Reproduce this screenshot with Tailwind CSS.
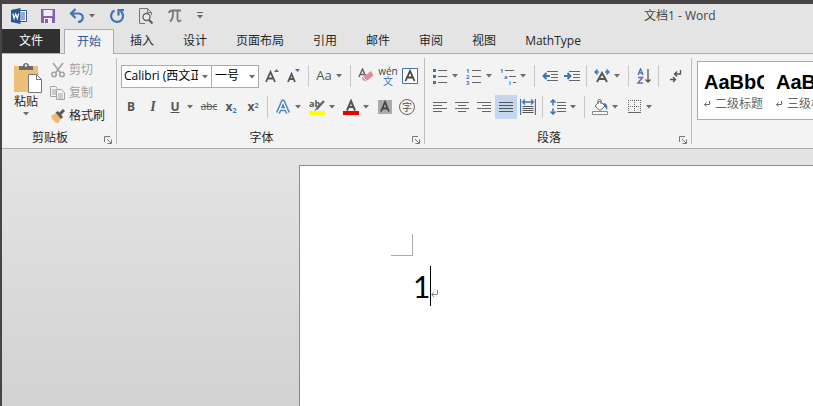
<!DOCTYPE html>
<html lang="zh-CN">
  <head>
    <meta charset="UTF-8" />
    <meta name="viewport" content="width=device-width, initial-scale=1.0" />
    <title>文档1 - Word</title>
    <script src="https://cdn.jsdelivr.net/npm/@tailwindcss/browser@4"></script>
  </head>
  <body class="flex h-screen flex-col overflow-hidden border-t-4 border-l-2 border-[#464446] bg-[#e4e4e4] font-['Open_Sans','Noto_Sans_CJK_SC',sans-serif] text-xs text-[#262626]">
    <svg class="hidden">
      <symbol id="caret" viewBox="0 0 12 6"><path d="M1 1h6L4 4.500z" fill="#6a6a6a" /></symbol>
      <symbol id="launcher" viewBox="0 0 8 8">
        <path d="M.5 6V.5H6M3 3l4 4M7.500 3.500v4h-4" fill="none" stroke="#777" />
      </symbol>
    </svg>

    <!-- title bar -->
    <header class="flex h-[24px] shrink-0 items-center whitespace-nowrap pl-[9px]">
      <div class="flex items-center gap-[13px]">
        <button aria-label="Word">
          <svg class="h-4 w-4" viewBox="0 0 16 16">
            <path d="M9 2.500h6.500v11H9" fill="#fff" stroke="#2a5699" />
            <path d="M10 5h4M10 7h4M10 9h4M10 11h4" stroke="#2a5699" />
            <path d="M0 2l9.500-2v16L0 14z" fill="#2a5699" />
            <path d="M1.800 5.500l1.300 5L4.700 6l1.600 4.500 1.300-5" fill="none" stroke="#fff" stroke-width="1.200" />
          </svg>
        </button>
        <button aria-label="保存">
          <svg class="h-4 w-4" viewBox="0 0 16 16">
            <path d="M1 1h14v14H1z" fill="#8a5fae" />
            <path d="M3.500 2h9v6h-9z" fill="#f4eef8" />
            <path d="M4 10h8v5H4z" fill="#f4eef8" />
            <path d="M5 11h3v4H5z" fill="#8a5fae" />
          </svg>
        </button>
        <div class="flex items-center">
          <button aria-label="撤消">
            <svg class="h-4 w-4" viewBox="0 0 16 16" fill="none" stroke="#3d74b5" stroke-width="2.200">
              <path d="M6.500 1L2 5.500 6.500 10M2.500 5.500h7c6 0 5.500 8-.500 8.500" />
            </svg>
          </button>
          <button class="ml-[3px]" aria-label="撤消列表"><svg class="h-[6px] w-2" viewBox="0 0 8 6"><use href="#caret" width="12" height="6" /></svg></button>
        </div>
        <button aria-label="重复">
          <svg class="h-4 w-4" viewBox="0 0 16 16" fill="none" stroke="#3d74b5" stroke-width="2.200">
            <path d="M5.500 2.500A6 6 0 1 0 11.500 3M15 2H9.500v5.500" />
          </svg>
        </button>
        <button aria-label="打印预览">
          <svg class="h-4 w-4" viewBox="0 0 16 16" fill="none" stroke="#777">
            <path d="M7 15.500H1.500V.5h8l4 4V7M9.500.5v4h4" fill="none" />
            <circle cx="8.500" cy="9" r="3.500" fill="#e9eef4" stroke="#666" stroke-width="1.400" />
            <path d="M11 12l3.500 3.500" stroke="#555" stroke-width="2" />
          </svg>
        </button>
        <button aria-label="公式">
          <svg class="h-4 w-4" viewBox="0 0 16 16" fill="none" stroke="#777" stroke-width="1.800">
            <path d="M2 5c.5-2 1.500-2.500 3-2.500h9M6 3c0 5 0 8-3 10.500M10.500 3v8c0 3 2 3 3.500 1" />
          </svg>
        </button>
        <button aria-label="自定义快速访问工具栏">
          <svg class="h-2 w-2" viewBox="0 0 8 8"><path d="M1 .5h6" stroke="#666" /><path d="M1 3h6L4 6.500z" fill="#666" /></svg>
        </button>
      </div>
      <h1 class="ml-[440px] text-[#444]">文档1 - Word</h1>
    </header>

    <!-- ribbon tabs -->
    <nav class="mt-px flex h-[25px] shrink-0 items-stretch gap-[3px] whitespace-nowrap border-b border-[#ababab]">
      <button class="mr-[1px] w-[58px] bg-[#303030] text-white">文件</button>
      <button class="-mb-px border border-b-0 border-[#ababab] bg-[#f3f3f3] px-3 text-[#2a5699]">开始</button>
      <button class="border border-transparent px-3">插入</button>
      <button class="border border-transparent px-3">设计</button>
      <button class="border border-transparent px-3">页面布局</button>
      <button class="border border-transparent px-3">引用</button>
      <button class="border border-transparent px-3">邮件</button>
      <button class="border border-transparent px-3">审阅</button>
      <button class="border border-transparent px-3">视图</button>
      <button class="border border-transparent px-3">MathType</button>
    </nav>

    <!-- ribbon -->
    <div class="flex h-[95px] shrink-0 items-stretch overflow-hidden whitespace-nowrap border-b border-[#ababab] bg-[#f3f3f3] py-1">
      <!-- clipboard -->
      <section class="flex w-[115px] shrink-0 flex-col border-r border-[#bdbdbd]">
        <div class="flex flex-1 pl-2">
          <button class="flex w-8 flex-col items-center pt-1">
            <svg class="h-8 w-8 shrink-0" viewBox="0 0 32 32">
              <path d="M4 4h24v26H4z" fill="#edc077" />
              <path d="M9 8V4h4c0-4 6-4 6 0h4v4z" fill="#6a6a6a" />
              <circle cx="16" cy="3.500" r="1.200" fill="#f3f3f3" />
              <path d="M18.500 12.500h8l5 5v13h-13z" fill="#fff" stroke="#777" />
              <path d="M26.500 12.500v5h5" fill="none" stroke="#777" />
            </svg>
            <span class="leading-4">粘贴</span>
            <svg class="mt-px h-[6px] w-2" viewBox="0 0 8 6"><use href="#caret" width="12" height="6" /></svg>
          </button>
          <div class="flex flex-col pl-2">
            <button class="flex h-[23px] items-center gap-[3px] text-[#a0a0a0]">
              <svg class="h-4 w-4" viewBox="0 0 16 16" fill="none" stroke="#a3a3a3" stroke-width="1.600">
                <path d="M3 1l7.500 10M13 1L5.500 11" />
                <circle cx="4" cy="12.500" r="2.200" /><circle cx="12" cy="12.500" r="2.200" />
              </svg>
              剪切
            </button>
            <button class="flex h-[23px] items-center gap-[3px] text-[#a0a0a0]">
              <svg class="h-4 w-4" viewBox="0 0 16 16" fill="#f3f3f3" stroke="#a3a3a3">
                <path d="M.5 1.500h5l2 2v8h-7zM2 5h4M2 7h4M2 9h4" />
                <path d="M6.500 4.500h5l3 3v7h-8zM8 9h5M8 11h5M8 13h5" />
              </svg>
              复制
            </button>
            <button class="flex h-[23px] items-center gap-[3px]">
              <svg class="h-4 w-4" viewBox="0 0 16 16">
                <path d="M1 8l5-3 5 5.500-3 5C5 14.500 2 12 1 8z" fill="#edb975" />
                <path d="M5.500 4.500L8 3l5 6-2 2z" fill="#5a5a5a" />
                <path d="M10 6l4-4" stroke="#5a5a5a" stroke-width="3" />
              </svg>
              格式刷
            </button>
          </div>
        </div>
        <div class="flex h-3 items-center pr-1">
          <span class="flex-1 pr-[6px] text-center">剪贴板</span>
          <button class="self-end" aria-label="剪贴板选项"><svg class="h-2 w-2"><use href="#launcher" /></svg></button>
        </div>
      </section>

      <!-- font -->
      <section class="flex w-[308px] shrink-0 flex-col border-r border-[#bdbdbd]">
        <div class="flex flex-1 flex-col gap-[7px] pt-[6px] pl-[3px]">
          <div class="flex h-6 items-center">
            <div class="relative ml-px flex h-[23px] w-[91px] border border-[#ababab] bg-white">
              <select aria-label="字体" class="w-[76px] appearance-none overflow-hidden pl-[2px] text-xs text-black"><option>Calibri (西文正文)</option></select>
              <svg class="pointer-events-none absolute top-2 right-0 h-[6px] w-[10px]" viewBox="0 0 10 6"><use href="#caret" width="12" height="6" /></svg>
            </div>
            <div class="relative -ml-px mr-[2px] flex h-[23px] w-12 border border-[#ababab] bg-white">
              <select aria-label="字号" class="w-9 appearance-none pl-[3px] text-xs text-black"><option>一号</option></select>
              <svg class="pointer-events-none absolute top-2 right-0 h-[6px] w-[10px]" viewBox="0 0 10 6"><use href="#caret" width="12" height="6" /></svg>
            </div>
            <button class="flex w-[22px] items-center justify-center" aria-label="增大字号">
              <svg class="h-4 w-4" viewBox="0 0 16 16"><path d="M2 14L6.500 4 11 14M3.500 10.500h6" fill="none" stroke="#555" stroke-width="1.800" /><path d="M10 4h5l-2.500-3z" fill="#3d74b5" /></svg>
            </button>
            <button class="flex w-[22px] items-center justify-center" aria-label="减小字号">
              <svg class="h-4 w-4" viewBox="0 0 16 16"><path d="M2 14l3.500-8L9 14M3.500 11h4" fill="none" stroke="#555" stroke-width="1.800" /><path d="M9 1h5l-2.500 3z" fill="#3d74b5" /></svg>
            </button>
            <span class="mr-1 ml-[3px] h-[22px] w-px bg-[#c6c6c6]"></span>
            <button class="w-[22px] text-center text-[13px] text-[#555]">Aa</button>
            <button class="w-3" aria-label="更改大小写"><svg class="h-[6px] w-3"><use href="#caret" /></svg></button>
            <span class="mr-1 ml-[3px] h-[22px] w-px bg-[#c6c6c6]"></span>
            <button class="flex w-[22px] items-center justify-center" aria-label="清除格式">
              <svg class="h-4 w-4" viewBox="0 0 16 16"><path d="M1 9l3.500-8L8 9M2.500 6.500h4" fill="none" stroke="#666" stroke-width="1.500" /><path d="M9 6l4-3 2.500 4.500L8 13.500 4.500 12 4 9.500z" fill="#e58a99" /><path d="M5 9l4 4" stroke="#f3f3f3" /></svg>
            </button>
            <button class="flex w-[22px] flex-col items-center text-[10px] leading-[10px] text-[#444]"><span>wén</span><span class="text-[#3d74b5]">文</span></button>
            <button class="flex w-[22px] items-center justify-center" aria-label="字符边框">
              <svg class="h-4 w-4" viewBox="0 0 16 16" fill="none"><path d="M.5.5h15v15H.5z" fill="#fff" stroke="#3d74b5" /><path d="M3.500 13L8 3l4.500 10M5 9.500h6" stroke="#444" stroke-width="1.800" /></svg>
            </button>
          </div>
          <div class="flex h-6 items-center text-[#555]">
            <button class="w-[22px] font-bold">B</button>
            <button class="w-[22px] font-['Liberation_Serif',serif] text-sm font-bold italic">I</button>
            <button class="w-[22px] font-bold underline">U</button>
            <button class="w-3" aria-label="下划线样式"><svg class="h-[6px] w-3"><use href="#caret" /></svg></button>
            <button class="w-[22px] text-[10px] line-through">abc</button>
            <button class="w-[22px] font-bold" aria-label="下标">x<sub class="text-[7px] text-[#3d74b5]">2</sub></button>
            <button class="w-[22px] font-bold" aria-label="上标">x<sup class="text-[7px] text-[#3d74b5]">2</sup></button>
            <span class="mr-1 ml-[3px] h-[22px] w-px bg-[#c6c6c6]"></span>
            <button class="flex w-[22px] items-center justify-center" aria-label="文本效果">
              <svg class="h-4 w-4" viewBox="0 0 16 16" fill="none" stroke-linejoin="round"><path d="M3 14L8 2.500 13 14M5 10h6" stroke="#a9c5ea" stroke-width="5" /><path d="M3 14L8 2.500 13 14M5 10h6" stroke="#3d74b5" stroke-width="3.400" /><path d="M3 14L8 2.500 13 14M5 10h6" stroke="#fff" stroke-width="1.400" /></svg>
            </button>
            <button class="w-3" aria-label="文本效果列表"><svg class="h-[6px] w-3"><use href="#caret" /></svg></button>
            <button class="flex w-[22px] items-center justify-center" aria-label="突出显示">
              <svg class="h-4 w-4 overflow-visible" viewBox="0 0 16 16"><text x="0" y="8" font-size="9" font-weight="bold" fill="#555">ab</text><path d="M15 2L8 9.500" stroke="#666" stroke-width="2.500" /><path d="M8 8l2 2-5 2z" fill="#777" /><path d="M0 12h16v4H0z" fill="#ff0" /></svg>
            </button>
            <button class="w-3" aria-label="突出显示颜色"><svg class="h-[6px] w-3"><use href="#caret" /></svg></button>
            <button class="flex w-[22px] items-center justify-center" aria-label="字体颜色">
              <svg class="h-4 w-4" viewBox="0 0 16 16"><path d="M4 11.500L8 2l4 9.500M5.500 8h5" fill="none" stroke="#555" stroke-width="2" /><path d="M0 12h16v4H0z" fill="#e60000" /></svg>
            </button>
            <button class="w-3" aria-label="字体颜色列表"><svg class="h-[6px] w-3"><use href="#caret" /></svg></button>
            <button class="flex w-[22px] items-center justify-center" aria-label="字符底纹">
              <svg class="h-4 w-4" viewBox="0 0 16 16"><path d="M1 1h14v14H1z" fill="#ababab" /><path d="M4 12.500L8 3l4 9.500M5.500 9.500h5" fill="none" stroke="#444" stroke-width="1.800" /></svg>
            </button>
            <button class="flex w-[22px] items-center justify-center" aria-label="带圈字符">
              <span class="flex h-4 w-4 items-center justify-center rounded-full border border-[#666] text-[10px] leading-none">字</span>
            </button>
          </div>
        </div>
        <div class="flex h-3 items-center pr-1">
          <span class="flex-1 pr-[6px] text-center">字体</span>
          <button class="self-end" aria-label="字体选项"><svg class="h-2 w-2"><use href="#launcher" /></svg></button>
        </div>
      </section>

      <!-- paragraph -->
      <section class="flex w-[267px] shrink-0 flex-col border-r border-[#bdbdbd]">
        <div class="flex flex-1 flex-col gap-[7px] pt-[6px] pl-1">
          <div class="flex h-6 items-center">
            <button class="flex w-[22px] items-center justify-center" aria-label="项目符号">
              <svg class="h-4 w-4" viewBox="0 0 16 16"><path d="M6 2.500h9M6 8.500h9M6 14.500h9" stroke="#666" /><path d="M1 1h3v3H1zM1 7h3v3H1zM1 13h3v3H1z" fill="#3d74b5" /></svg>
            </button>
            <button class="w-3" aria-label="项目符号库"><svg class="h-[6px] w-3"><use href="#caret" /></svg></button>
            <button class="flex w-[22px] items-center justify-center" aria-label="编号">
              <svg class="h-4 w-4 overflow-visible" viewBox="0 0 16 16"><path d="M6 2.500h9M6 8.500h9M6 14.500h9" stroke="#666" /><g font-size="6" font-weight="bold" fill="#3d74b5"><text x="0" y="5">1</text><text x="0" y="11">2</text><text x="0" y="17">3</text></g></svg>
            </button>
            <button class="w-3" aria-label="编号库"><svg class="h-[6px] w-3"><use href="#caret" /></svg></button>
            <button class="flex w-[22px] items-center justify-center" aria-label="多级列表">
              <svg class="h-4 w-4 overflow-visible" viewBox="0 0 16 16"><path d="M5 2.500h9M9 8.500h7M13 14.500h3" stroke="#666" /><g font-size="6" font-weight="bold" fill="#3d74b5"><text x="0" y="5">1</text><text x="4" y="11">a</text><text x="9" y="17">i</text></g></svg>
            </button>
            <button class="w-3" aria-label="多级列表库"><svg class="h-[6px] w-3"><use href="#caret" /></svg></button>
            <span class="mr-1 ml-[3px] h-[22px] w-px bg-[#c6c6c6]"></span>
            <button class="flex w-[22px] items-center justify-center" aria-label="减少缩进量">
              <svg class="h-4 w-4" viewBox="0 0 16 16" fill="none"><path d="M5 3.500h11M9 6.500h7M9 9.500h7M5 12.500h11" stroke="#666" /><path d="M8 8H2M4.500 5L1.500 8l3 3" stroke="#3d74b5" stroke-width="2" /></svg>
            </button>
            <button class="flex w-[22px] items-center justify-center" aria-label="增加缩进量">
              <svg class="h-4 w-4" viewBox="0 0 16 16" fill="none"><path d="M5 3.500h11M9 6.500h7M9 9.500h7M5 12.500h11" stroke="#666" /><path d="M0 8h6M3.500 5l3 3-3 3" stroke="#3d74b5" stroke-width="2" /></svg>
            </button>
            <span class="mr-1 ml-[3px] h-[22px] w-px bg-[#c6c6c6]"></span>
            <button class="flex w-[22px] items-center justify-center" aria-label="中文版式">
              <svg class="h-4 w-4" viewBox="0 0 16 16" fill="none"><path d="M3 14L8 5l5 9M4.500 11h7" stroke="#555" stroke-width="2" /><path d="M5 4H1M3.500 1.500L1 4l2.500 2.500M11 4h4M12.500 1.500L15 4l-2.500 2.500" stroke="#3d74b5" stroke-width="1.400" /></svg>
            </button>
            <button class="w-3" aria-label="中文版式列表"><svg class="h-[6px] w-3"><use href="#caret" /></svg></button>
            <span class="mr-1 ml-[3px] h-[22px] w-px bg-[#c6c6c6]"></span>
            <button class="flex w-[22px] items-center justify-center" aria-label="排序">
              <svg class="h-4 w-4" viewBox="0 0 16 16" fill="none"><path d="M2 7l2.500-6L7 7M3 5h3" stroke="#3d74b5" stroke-width="1.300" /><path d="M2 9.500h4.500L2 15h5" stroke="#8a5fae" stroke-width="1.500" /><path d="M12 1v13M9.500 11.500L12 14l2.500-2.500" stroke="#555" stroke-width="1.300" /></svg>
            </button>
            <span class="mr-1 ml-[3px] h-[22px] w-px bg-[#c6c6c6]"></span>
            <button class="flex w-[22px] items-center justify-center" aria-label="显示编辑标记">
              <svg class="h-4 w-4" viewBox="0 0 16 16" fill="none" stroke="#555" stroke-width="1.300"><path d="M14.500 2v4H9M11 3.500L8.500 6 11 8.500M4 11.500h5.500M7 9l2.500 2.500L7 14" /></svg>
            </button>
          </div>
          <div class="flex h-6 items-center">
            <button class="flex w-[22px] items-center justify-center" aria-label="左对齐">
              <svg class="h-4 w-4" viewBox="0 0 16 16"><path d="M1 3.500h14M1 6.500h9M1 9.500h14M1 12.500h9" stroke="#666" /></svg>
            </button>
            <button class="flex w-[22px] items-center justify-center" aria-label="居中">
              <svg class="h-4 w-4" viewBox="0 0 16 16"><path d="M1 3.500h14M4 6.500h8M1 9.500h14M4 12.500h8" stroke="#666" /></svg>
            </button>
            <button class="flex w-[22px] items-center justify-center" aria-label="右对齐">
              <svg class="h-4 w-4" viewBox="0 0 16 16"><path d="M1 3.500h14M6 6.500h9M1 9.500h14M6 12.500h9" stroke="#666" /></svg>
            </button>
            <button class="flex h-6 w-[22px] items-center justify-center bg-[#c5d5ee]" aria-label="两端对齐">
              <svg class="h-4 w-4" viewBox="0 0 16 16"><path d="M1 3.500h14M1 6.500h14M1 9.500h14M1 12.500h14" stroke="#555" /></svg>
            </button>
            <button class="flex w-[22px] items-center justify-center" aria-label="分散对齐">
              <svg class="h-4 w-4" viewBox="0 0 16 16" fill="none"><path d="M2.500 7.500h11M2.500 9.500h11M2.500 11.500h11M2.500 13.500h11" stroke="#555" /><path d="M.5 0v16M15.500 0v16M3 3h10M5 .5L2.500 3 5 5.500M11 .5L13.500 3 11 5.500" stroke="#3d74b5" stroke-width="1.300" /></svg>
            </button>
            <span class="mr-1 ml-[3px] h-[22px] w-px bg-[#c6c6c6]"></span>
            <button class="flex w-[22px] items-center justify-center" aria-label="行距">
              <svg class="h-4 w-4" viewBox="0 0 16 16" fill="none"><path d="M7 3.500h9M7 6.500h9M7 9.500h9M7 12.500h9" stroke="#666" /><path d="M3 1v5.500M.5 3.500L3 1l2.500 2.500M3 9.500V15M.5 12.500L3 15l2.500-2.500" stroke="#3d74b5" stroke-width="1.500" /></svg>
            </button>
            <button class="w-3" aria-label="行距列表"><svg class="h-[6px] w-3"><use href="#caret" /></svg></button>
            <span class="mr-1 ml-[3px] h-[22px] w-px bg-[#c6c6c6]"></span>
            <button class="flex w-[22px] items-center justify-center" aria-label="底纹">
              <svg class="h-4 w-4" viewBox="0 0 16 16" fill="none"><path d="M3 7l5-5 5 5-5 4.500zM6 5V1.500C6 0 9 0 9 1.500V5" fill="#fff" stroke="#666" /><path d="M11 4c4 0 5 3 4 7-1-1-2-3-2-4z" fill="#3d74b5" /><path d="M.5 12.500h15v3H.5z" fill="#fff" stroke="#888" /></svg>
            </button>
            <button class="w-3" aria-label="底纹颜色"><svg class="h-[6px] w-3"><use href="#caret" /></svg></button>
            <button class="flex w-[22px] items-center justify-center" aria-label="边框">
              <svg class="h-4 w-4" viewBox="0 0 16 16" fill="none" stroke="#666"><path d="M2 1.500h13M2 7.500h13M2.500 1v12M8.500 1v12M14.500 1v12" stroke-dasharray="1 1" /><path d="M2 13.500h13" /></svg>
            </button>
            <button class="w-3" aria-label="边框列表"><svg class="h-[6px] w-3"><use href="#caret" /></svg></button>
          </div>
        </div>
        <div class="flex h-3 items-center pr-1">
          <span class="flex-1 pr-[6px] text-center">段落</span>
          <button class="self-end" aria-label="段落选项"><svg class="h-2 w-2"><use href="#launcher" /></svg></button>
        </div>
      </section>

      <!-- styles gallery -->
      <section class="min-w-0 flex-1 pt-[3px] pl-[5px]">
        <div class="flex h-[59px] overflow-hidden border border-r-0 border-[#ababab] bg-white pt-[3px]">
          <button class="flex w-[72px] shrink-0 flex-col justify-center px-[6px] text-left text-[#666]">
            <span class="block w-full overflow-hidden font-['Liberation_Sans',sans-serif] text-xl leading-6 font-bold text-black">AaBbCc</span>
            <span class="flex items-center gap-[5px] leading-5">
              <svg class="h-[6px] w-[6px]" viewBox="0 0 6 6" fill="none" stroke="#666"><path d="M5.500 0v3.500h-5M2.500 1.500l-2 2 2 2" /></svg>
              二级标题
            </span>
          </button>
          <button class="flex w-[72px] shrink-0 flex-col justify-center px-[6px] text-left text-[#666]">
            <span class="block w-full overflow-hidden font-['Liberation_Sans',sans-serif] text-xl leading-6 font-bold text-black">AaBbCc</span>
            <span class="flex items-center gap-[5px] leading-5">
              <svg class="h-[6px] w-[6px]" viewBox="0 0 6 6" fill="none" stroke="#666"><path d="M5.500 0v3.500h-5M2.500 1.500l-2 2 2 2" /></svg>
              三级标题
            </span>
          </button>
        </div>
      </section>
    </div>

    <!-- document -->
    <main class="flex-1 bg-linear-to-b from-[#e4e4e4] to-[#d2d2d2] pt-4 pl-[297px]">
      <article class="h-full border-t border-l border-[#8c8c8c] bg-white pt-[68px] pl-[91px]">
        <div class="h-[22px] w-[22px] border-r border-b border-[#ababab]"></div>
        <p class="mt-[10px] flex h-10 items-center pl-[22px] font-['Lato',sans-serif] text-3xl text-black">
          1<span class="h-10 w-px bg-black"></span>
          <svg class="mt-4 h-2 w-[7px]" viewBox="0 0 7 8" fill="none" stroke="#888"><path d="M6.500 0v4.500h-6M3 2L.5 4.500 3 7" /></svg>
        </p>
      </article>
    </main>
  </body>
</html>
